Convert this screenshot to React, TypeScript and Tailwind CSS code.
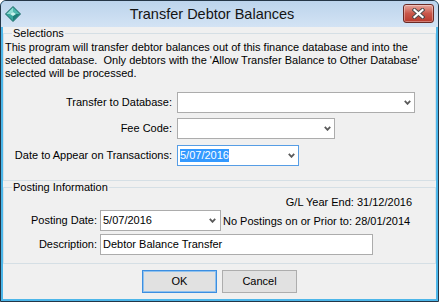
import React from "react";

function Diamond() {
  return (
    <svg width="16" height="16" viewBox="0 0 16 16">
      <polygon points="8,0.5 15.5,8 8,15.5 0.5,8" fill="#2f9a92" stroke="#1d6a66" strokeWidth="1" />
      <polygon points="8,1.5 8,6 5,8 1.5,8" fill="#8fdcd3" />
      <polygon points="8,1.5 14.5,8 11,8 8,6" fill="#4fb8ae" />
      <polygon points="1.5,8 5,8 8,10 8,14.5" fill="#3aa79e" />
      <polygon points="14.5,8 8,14.5 8,10 11,8" fill="#1f7e78" />
      <polygon points="8,6 11,8 8,10 5,8" fill="#c9f2ec" />
    </svg>
  );
}

function Arrow() {
  return (
    <svg width="7" height="5" viewBox="0 0 7 5" className="shrink-0">
      <polyline points="0.8,0.8 3.5,3.8 6.2,0.8" fill="none" stroke="#5a5a5a" strokeWidth="1.8" />
    </svg>
  );
}

export default function App() {
  return (
    <div className="w-[439px] h-[302px] font-['Liberation_Sans',Arial,sans-serif] text-[11px] leading-[13px] text-black">
      <div className="w-full h-full flex flex-col border border-[#243647] rounded-t-[6px] bg-[#4cb6e9] overflow-hidden">
        {/* Title bar */}
        <div className="h-[26px] shrink-0 flex items-start bg-linear-to-b from-[#bcd4ec] to-[#d3e3f4]">
          <div className="ml-[4px] mt-[5px] w-[16px] h-[16px] shrink-0">
            <Diamond />
          </div>
          <div className="flex-1 h-full flex items-center justify-center text-[14.5px] text-[#141414]">
            Transfer Debtor Balances
          </div>
          <div className="mt-[3px] mr-[4px] w-[31px] h-[19px] shrink-0 rounded-[3px] border border-[#6a2a25] bg-linear-to-b from-[#e6a59c] via-[#c9574a] to-[#b8382b] flex items-center justify-center shadow-[inset_0_0_0_1px_rgba(255,255,255,0.35)]">
            <svg width="13" height="11" viewBox="0 0 13 11">
              <g strokeLinecap="square">
                <line x1="2.5" y1="2" x2="10.5" y2="9" stroke="#4a4a4a" strokeWidth="4" />
                <line x1="10.5" y1="2" x2="2.5" y2="9" stroke="#4a4a4a" strokeWidth="4" />
                <line x1="2.5" y1="2" x2="10.5" y2="9" stroke="#ffffff" strokeWidth="2.2" />
                <line x1="10.5" y1="2" x2="2.5" y2="9" stroke="#ffffff" strokeWidth="2.2" />
              </g>
            </svg>
          </div>
        </div>

        {/* Client area */}
        <div className="flex-1 mx-[2px] mb-[2px] bg-[#f0f0f0] flex flex-col">
          {/* Selections */}
          <fieldset className="border border-[#d5dfe5] pb-[14px]">
            <legend className="ml-[8px] px-[1px] leading-[13px]">Selections</legend>
            <div className="mt-[1px] pl-[1px] whitespace-pre">
              <div>This program will transfer debtor balances out of this finance database and into the</div>
              <div>selected database.  Only debtors with the 'Allow Transfer Balance to Other Database'</div>
              <div>selected will be processed.</div>
            </div>

            <div className="mt-[12px] flex items-center h-[21px]">
              <div className="w-[173px] pr-[5px] text-right">Transfer to Database:</div>
              <div className="w-[238px] h-[21px] bg-white border border-[#acacac] flex items-center justify-end pr-[3px]">
                <Arrow />
              </div>
            </div>
            <div className="mt-[5px] flex items-center h-[21px]">
              <div className="w-[173px] pr-[5px] text-right">Fee Code:</div>
              <div className="w-[158px] h-[21px] bg-white border border-[#acacac] flex items-center justify-end pr-[3px]">
                <Arrow />
              </div>
            </div>
            <div className="mt-[6px] flex items-center h-[21px]">
              <div className="w-[173px] pr-[5px] text-right">Date to Appear on Transactions:</div>
              <div className="w-[122px] h-[21px] bg-white border border-[#569de5] flex items-center pl-[2px] pr-[3px]">
                <span className="bg-[#3399ff] text-white px-[0px]">5/07/2016</span>
                <div className="flex-1" />
                <Arrow />
              </div>
            </div>
          </fieldset>

          {/* Posting Information */}
          <fieldset className="border border-[#d5dfe5] pb-[8px]">
            <legend className="ml-[8px] px-[1px] leading-[13px]">Posting Information</legend>
            <div className="mt-[2px] pr-[23px] text-right">G/L Year End: 31/12/2016</div>
            <div className="mt-[1px] flex items-center h-[21px]">
              <div className="w-[96px] pr-[3px] text-right">Posting Date:</div>
              <div className="w-[121px] h-[21px] bg-white border border-[#acacac] flex items-center pl-[2px] pr-[4px]">
                <span>5/07/2016</span>
                <div className="flex-1" />
                <Arrow />
              </div>
              <div className="ml-[2px] pt-[2px]">No Postings on or Prior to: 28/01/2014</div>
            </div>
            <div className="mt-[3px] flex items-center h-[21px]">
              <div className="w-[96px] pr-[3px] text-right">Description:</div>
              <div className="w-[273px] h-[21px] bg-white border border-[#acacac] flex items-center pl-[2px]">
                Debtor Balance Transfer
              </div>
            </div>
          </fieldset>

          {/* Buttons */}
          <div className="mt-[6px] flex justify-center gap-[5px]">
            <button className="w-[75px] h-[23px] border border-[#3c8ee0] bg-[#e1e1e1] text-center leading-[21px] shadow-[inset_0_0_0_1px_#8fc1ee]">
              OK
            </button>
            <button className="w-[75px] h-[23px] border border-[#adadad] bg-[#e1e1e1] text-center leading-[21px]">
              Cancel
            </button>
          </div>
        </div>
      </div>
    </div>
  );
}
